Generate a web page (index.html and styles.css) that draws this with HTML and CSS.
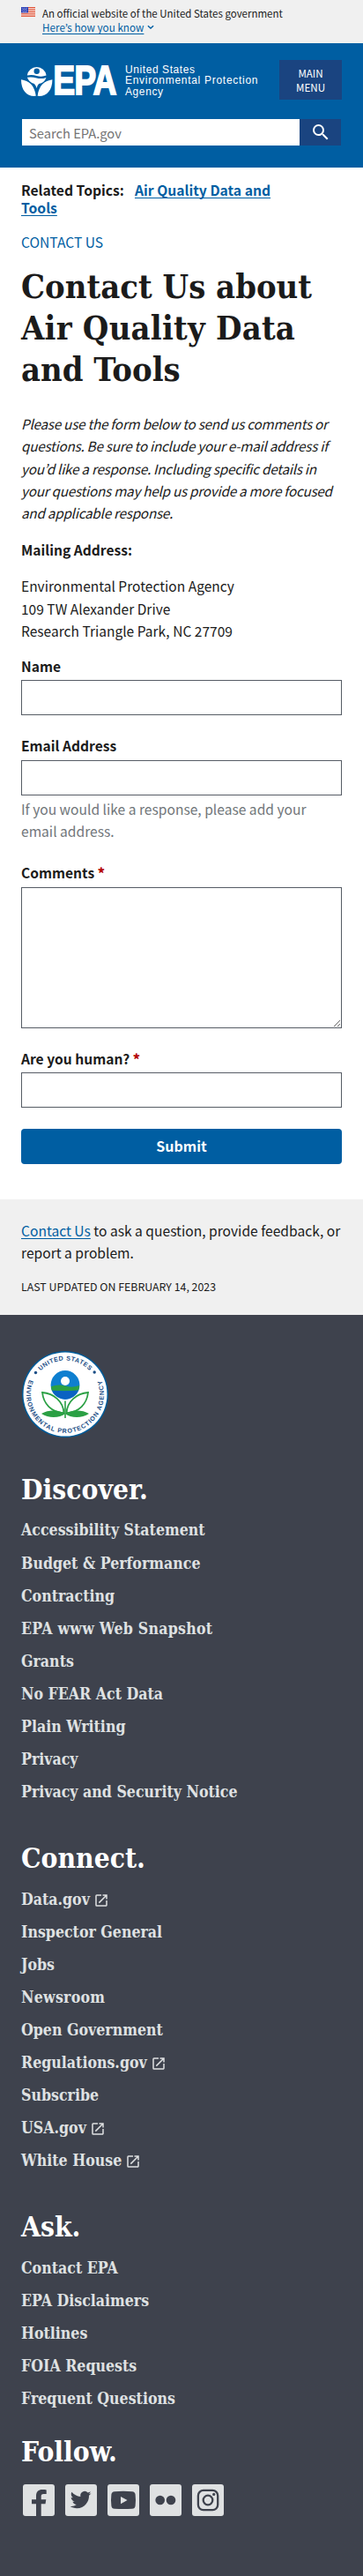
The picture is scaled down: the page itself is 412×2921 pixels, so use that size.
FILE: index.html
```html
<!DOCTYPE html>
<html lang="en">
<head>
<meta charset="utf-8">
<title>Contact Us about Air Quality Data and Tools | US EPA</title>
<link rel="stylesheet" href="styles.css">
</head>
<body>
<svg class="defs" width="0" height="0" aria-hidden="true">
  <symbol id="ext" viewBox="0 0 24 24"><path fill="currentColor" d="M19 19H5V5h7V3H5a2 2 0 0 0-2 2v14a2 2 0 0 0 2 2h14c1.1 0 2-.9 2-2v-7h-2v7zM14 3v2h3.59l-9.83 9.83 1.41 1.41L19 6.41V10h2V3h-7z"/></symbol>
</svg>
<div class="banner">
  <svg class="flag" viewBox="0 0 16 11" width="16" height="11">
    <rect width="16" height="11" fill="#fff"/>
    <path stroke="#db3e1f" stroke-width=".9" d="M0 .5h16M0 2.2h16M0 3.9h16M0 5.6h16M0 7.3h16M0 9h16M0 10.6h16"/>
    <rect width="8" height="6.4" fill="#1e33b1"/>
    <path stroke="#fff" stroke-width=".8" stroke-dasharray=".8 1" d="M.8 1.2h6.8M1.7 2.6h5.5M.8 4h6.8M1.7 5.3h5.5"/>
  </svg>
  <div>
    <p class="banner-text">An official website of the United States government</p>
    <p class="banner-link"><a href="#">Here’s how you know</a><svg viewBox="0 0 8 6" width="8" height="6"><path d="M.9 1.2 4 4.1l3.1-2.9" fill="none" stroke="#005ea2" stroke-width="1.4"/></svg></p>
  </div>
</div>
<header class="header">
  <div class="header-row">
    <svg class="logo" viewBox="0 -9 270 56" width="270" height="56" fill="#fff">
      <path d="M6.800 12.600a11 11 0 0 1 21.800 0q-5.400 2-10.900.4T6.800 12.600z"/>
      <circle cx="17.700" cy="7.700" r="3.200" fill="#005ea2"/>
      <path d="M6.900 14.800q5.200-1 10.600.6t11-.5a11 11 0 0 1-8.400 7.100q-2.400 2.400-2.400 5-.8-3-2.800-5A11 11 0 0 1 6.900 14.800z"/>
      <path d="M0 17.200C9 18.500 15.400 24 16.800 35.800 7 36.800 0 30 0 17.200zM35.400 17.200C26.400 18.500 20 24 18.600 35.800c9.800 1 16.800-5.800 16.800-18.600z"/>
      <text class="logo-mark" transform="translate(36.600 34.300) scale(.8 1)">EPA</text>
      <g class="logo-name">
        <text x="118" y="9.600" textLength="79">United States</text>
        <text x="118" y="22.200" textLength="150.500">Environmental Protection</text>
        <text x="118" y="35" textLength="43">Agency</text>
      </g>
    </svg>
    <button class="menu" type="button">MAIN<br>MENU</button>
  </div>
  <form class="search">
    <input type="search" placeholder="Search EPA.gov" aria-label="Search">
    <button type="button" aria-label="Search"><svg viewBox="0 0 24 24" width="24" height="24"><path fill="#fff" d="M15.500 14h-.79l-.28-.27A6.471 6.471 0 0 0 16 9.500 6.500 6.500 0 1 0 9.500 16c1.610 0 3.090-.59 4.230-1.570l.27.28v.79l5 4.990L20.490 19l-4.990-5zm-6 0C7.010 14 5 11.990 5 9.500S7.010 5 9.500 5 14 7.010 14 9.500 11.990 14 9.500 14z"/></svg></button>
  </form>
</header>
<main class="main">
  <p class="related"><span class="related-label">Related Topics:</span><a href="#">Air Quality Data and<br>Tools</a></p>
  <p class="area"><a href="#">CONTACT US</a></p>
  <h1>Contact Us about<br><span class="h1-wide">Air Quality Data</span><br>and Tools</h1>
  <p class="intro">Please use the form below to send us comments or<br>questions. Be sure to include your e-mail address if<br>you’d like a response. Including specific details in<br>your questions may help us provide a more focused<br>and applicable response.</p>
  <p class="mailing">Mailing Address:</p>
  <p class="address">Environmental Protection Agency<br>109 TW Alexander Drive<br>Research Triangle Park, NC 27709</p>
  <form class="form">
    <div class="field"><label for="name">Name</label><input id="name" type="text"></div>
    <div class="field"><label for="email">Email Address</label><input id="email" type="text">
      <p class="help">If you would like a response, please add your<br>email address.</p></div>
    <div class="field"><label for="comments">Comments <b>*</b></label><textarea id="comments"></textarea></div>
    <div class="field"><label for="human">Are you human? <b>*</b></label><input id="human" type="text"></div>
    <button class="submit" type="button">Submit</button>
  </form>
</main>
<section class="prefooter">
  <p><a href="#">Contact Us</a> to ask a question, provide feedback, or<br>report a problem.</p>
  <p class="updated">LAST UPDATED ON FEBRUARY 14, 2023</p>
</section>
<footer class="footer">
  <svg class="seal" viewBox="0 0 100 100" width="100" height="100">
    <defs>
      <path id="arc-top" d="M11.500 50a38.500 38.500 0 0 1 77 0"/>
      <path id="arc-bottom" d="M17.700 20.100A44 44 0 1 0 82.300 20.100"/>
    </defs>
    <circle cx="50" cy="50" r="49" fill="#005b99"/>
    <circle cx="50" cy="50" r="47.500" fill="#fff"/>
    <g class="seal-text">
      <text text-anchor="middle"><textPath href="#arc-top" startOffset="50%">UNITED STATES</textPath></text>
      <text text-anchor="middle" class="seal-bottom"><textPath href="#arc-bottom" startOffset="50%">ENVIRONMENTAL PROTECTION AGENCY</textPath></text>
    </g>
    <circle cx="16.500" cy="25.500" r="1.700" fill="#1b4e86"/><circle cx="83.200" cy="25" r="1.700" fill="#1b4e86"/>
    <circle cx="50" cy="39.500" r="16.400" fill="#0e7fd0"/>
    <path d="M34 41.200q8-3 16-.6t16-.7q0 3-1 5.800-15.600 1.200-30 .3-1-2.300-1-4.800z" fill="#2ba044"/>
    <path d="M35 45.800q15 1 30-.2A16.400 16.400 0 0 1 35 45.800z" fill="#0a62c2"/>
    <circle cx="50" cy="35" r="5" fill="#fff"/>
    <g fill="none" stroke="#2ba044" stroke-width="1.800">
      <path d="M50 57.500V77" stroke-width="1.600"/>
      <path d="M48.500 71.500C48 58 37 49 24 48c1.500 13 10 22 24.500 23.500zM51.500 71.500C52 58 63 49 76 48c-1.500 13-10 22-24.500 23.500z"/>
    </g>
    <path d="M23 72c8-5 21-4.500 27 0-6 5-19 5.500-27 0zM77 72c-8-5-21-4.500-27 0 6 5 19 5.500 27 0z" fill="#2ba044"/>
  </svg>
  <section class="discover">
    <h2>Discover.</h2>
    <ul>
      <li><a href="#">Accessibility Statement</a></li>
      <li><a href="#">Budget &amp; Performance</a></li>
      <li><a href="#">Contracting</a></li>
      <li class="wide"><a href="#">EPA www Web Snapshot</a></li>
      <li><a href="#">Grants</a></li>
      <li><a href="#">No FEAR Act Data</a></li>
      <li><a href="#">Plain Writing</a></li>
      <li><a href="#">Privacy</a></li>
      <li><a href="#">Privacy and Security Notice</a></li>
    </ul>
  </section>
  <section>
    <h2>Connect.</h2>
    <ul>
      <li><a href="#">Data.gov</a><svg class="ext"><use href="#ext"/></svg></li>
      <li><a href="#">Inspector General</a></li>
      <li><a href="#">Jobs</a></li>
      <li class="wide"><a href="#">Newsroom</a></li>
      <li><a href="#">Open Government</a></li>
      <li><a href="#">Regulations.gov</a><svg class="ext"><use href="#ext"/></svg></li>
      <li><a href="#">Subscribe</a></li>
      <li><a href="#">USA.gov</a><svg class="ext"><use href="#ext"/></svg></li>
      <li><a href="#">White House</a><svg class="ext"><use href="#ext"/></svg></li>
    </ul>
  </section>
  <section>
    <h2>Ask.</h2>
    <ul>
      <li><a href="#">Contact EPA</a></li>
      <li><a href="#">EPA Disclaimers</a></li>
      <li><a href="#">Hotlines</a></li>
      <li><a href="#">FOIA Requests</a></li>
      <li><a href="#">Frequent Questions</a></li>
    </ul>
  </section>
  <section class="follow">
    <h2>Follow.</h2>
    <div class="social">
      <svg viewBox="0 0 36 36"><rect width="36" height="36" rx="3" fill="#dfe1e2"/><path fill="#3e424d" d="M15 36V22.300h-5v-5h5v-4.100C15 8.500 17.800 6 22 6c2 0 3.700.2 4.700.4v4.700h-3.200c-2.200 0-2.800 1.100-2.800 2.700v3.500h5.600l-.8 5h-4.800V36z"/></svg>
      <svg viewBox="0 0 36 36"><rect width="36" height="36" rx="3" fill="#dfe1e2"/><path fill="#3e424d" d="M29.500 10.200c-.9.400-1.800.7-2.800.8 1-.6 1.800-1.600 2.100-2.700-.9.600-2 1-3.100 1.200a4.850 4.850 0 0 0-8.300 4.400c-4-.2-7.600-2.100-10-5.100a4.850 4.850 0 0 0 1.500 6.500c-.8 0-1.500-.2-2.200-.6v.1c0 2.400 1.700 4.300 3.900 4.800-.7.200-1.500.2-2.200.1.600 1.900 2.400 3.300 4.500 3.400A9.800 9.800 0 0 1 5.700 25c2.200 1.400 4.700 2.200 7.500 2.200 9 0 14.100-7.600 13.800-14.500 1-.7 1.800-1.500 2.500-2.500z"/></svg>
      <svg viewBox="0 0 36 36"><rect width="36" height="36" rx="3" fill="#dfe1e2"/><path fill="#3e424d" d="M8 8.300q10-.9 20 0 3.200.2 3.600 3.300.8 6.400 0 12.800-.4 3.100-3.600 3.300-10 .8-20 0-3.200-.2-3.600-3.300-.8-6.400 0-12.800.4-3.100 3.600-3.300z"/><path d="m15 13.900 7.500 4.200-7.500 4.200z" fill="#dfe1e2"/></svg>
      <svg viewBox="0 0 36 36"><rect width="36" height="36" rx="3" fill="#dfe1e2"/><circle cx="11.700" cy="18" r="5.300" fill="#3e424d"/><circle cx="24" cy="18" r="5.300" fill="#3e424d"/></svg>
      <svg viewBox="0 0 36 36"><rect width="36" height="36" rx="3" fill="#dfe1e2"/><g fill="none" stroke="#3e424d" stroke-width="2.300"><rect x="6.900" y="6.900" width="22.300" height="22.300" rx="6"/><circle cx="18" cy="18" r="5.300"/></g><circle cx="24.700" cy="11.400" r="1.600" fill="#3e424d"/></svg>
    </div>
  </section>
</footer>
</body>
</html>
```
FILE: styles.css
```css
* { box-sizing: border-box; }
body {
  margin: 0;
  background: #fff;
  color: #1b1b1b;
  font: 15.6px/25.4px "Noto Sans CJK JP", "Noto Sans", sans-serif;
}
p, h1, h2, ul { margin: 0; padding: 0; }
a { color: #005ea2; text-underline-offset: 1.5px; text-decoration-thickness: 1px; text-decoration-skip-ink: none; }
svg { display: block; flex: none; }
.defs { position: absolute; }

.banner {
  display: flex;
  gap: 8px;
  height: 49px;
  padding: 7px 24px 0;
  background: #f0f0f0;
  font-size: 11.5px;
  line-height: 16px;
}
.flag { margin-top: 1px; }
.banner-link { display: flex; align-items: center; gap: 4px; font-size: 11.7px; }

.header {
  height: 141px;
  padding: 19px 24px 0;
  background: #005ea2;
}
.header-row { display: flex; justify-content: space-between; height: 45px; }
.logo { margin-top: -4px; }
.logo-mark { font: bold 46px "Liberation Sans", Arial, sans-serif; letter-spacing: -.8px; stroke: #fff; stroke-width: 2px; }
.logo-name { font: 12px "Liberation Sans", Arial, sans-serif; }
.menu {
  width: 71px;
  height: 45px;
  padding: 0;
  border: 0;
  background: #1a4480;
  color: #fff;
  font: 11.6px/16px "Noto Sans CJK JP", "Noto Sans", sans-serif;
}
.search { display: flex; height: 30px; margin-top: 22px; padding-left: 1px; }
.search input {
  width: 315px;
  height: 30px;
  padding: 0 8px;
  border: 0;
  border-radius: 0;
  background: #fff;
  font: 14.7px/28px "Noto Sans CJK JP", "Noto Sans", sans-serif;
}
.search input::placeholder { color: #757575; }
.search button {
  display: flex;
  align-items: center;
  justify-content: center;
  width: 47px;
  padding: 0;
  border: 0;
  background: #1a4480;
}

.main { height: 1170px; padding: 15.5px 24px 0; }
.related { font-size: 15.7px; line-height: 20px; font-weight: 700; }
.related-label { margin-right: 12px; }
.area { margin-top: 18px; line-height: 20px; }
.area a { text-decoration: none; }
h1, h2, .footer li { font-family: "DejaVu Serif Condensed", "DejaVu Serif", serif; font-stretch: condensed; font-weight: 700; }
h1 { margin-top: 18px; font-size: 37.8px; line-height: 47.4px; }
.h1-wide { letter-spacing: .2px; }
.intro { margin-top: 24px; font-size: 15.3px; font-style: italic; letter-spacing: -.26px; }
.mailing { margin-top: 16.5px; font-weight: 700; }
.address { margin-top: 15.5px; font-size: 15.5px; letter-spacing: .02px; }

.form { margin-top: 14.1px; }
.field { margin-bottom: 21.3px; }
label { display: block; height: 29px; padding-top: .6px; font-weight: 700; }
label b { color: #b50909; }
.field input, textarea {
  display: block;
  width: 100%;
  height: 40px;
  margin: 0;
  border: 1px solid #565c65;
  border-radius: 0;
  background: #fff;
}
textarea { height: 160px; resize: vertical; }
.help { margin-top: 3px; color: #71767a; }
.submit {
  display: block;
  width: 100%;
  height: 40px;
  margin-top: 24px;
  padding: 0 0 2px;
  border: 0;
  border-radius: 4px;
  background: #005ea2;
  color: #fff;
  font: 700 16px/24px "Noto Sans CJK JP", "Noto Sans", sans-serif;
}

.prefooter { height: 131px; padding: 22.5px 24px 0; background: #f0f0f0; white-space: nowrap; }
.updated { margin-top: 15.5px; font-size: 12.36px; line-height: 20px; }

.footer { height: 1430px; padding: 40px 24px 0; background: #3e424d; }
.seal-text { font: bold 7.2px "Liberation Sans", Arial, sans-serif; fill: #1b4e86; letter-spacing: .5px; }
.seal-bottom { letter-spacing: .9px; }
h2 { margin-top: 37px; color: #fff; font-size: 31.5px; line-height: 40px; }
.discover h2 { margin-top: 38.2px; }
.footer ul { margin-top: 7.3px; list-style: none; }
.footer li { display: flex; align-items: center; gap: 4px; height: 37.1px; font-size: 17.6px; line-height: 37.1px; }
.footer .wide { letter-spacing: .25px; }
.footer li a { color: #dfe1e2; text-decoration: none; }
.ext { width: 18px; height: 18px; margin-top: 3px; color: #dfe1e2; }
.follow h2 { margin-top: 21.5px; }
.social { display: flex; gap: 12px; margin-top: 17px; padding-left: 2px; }
.social svg { width: 36px; height: 36px; }
```
